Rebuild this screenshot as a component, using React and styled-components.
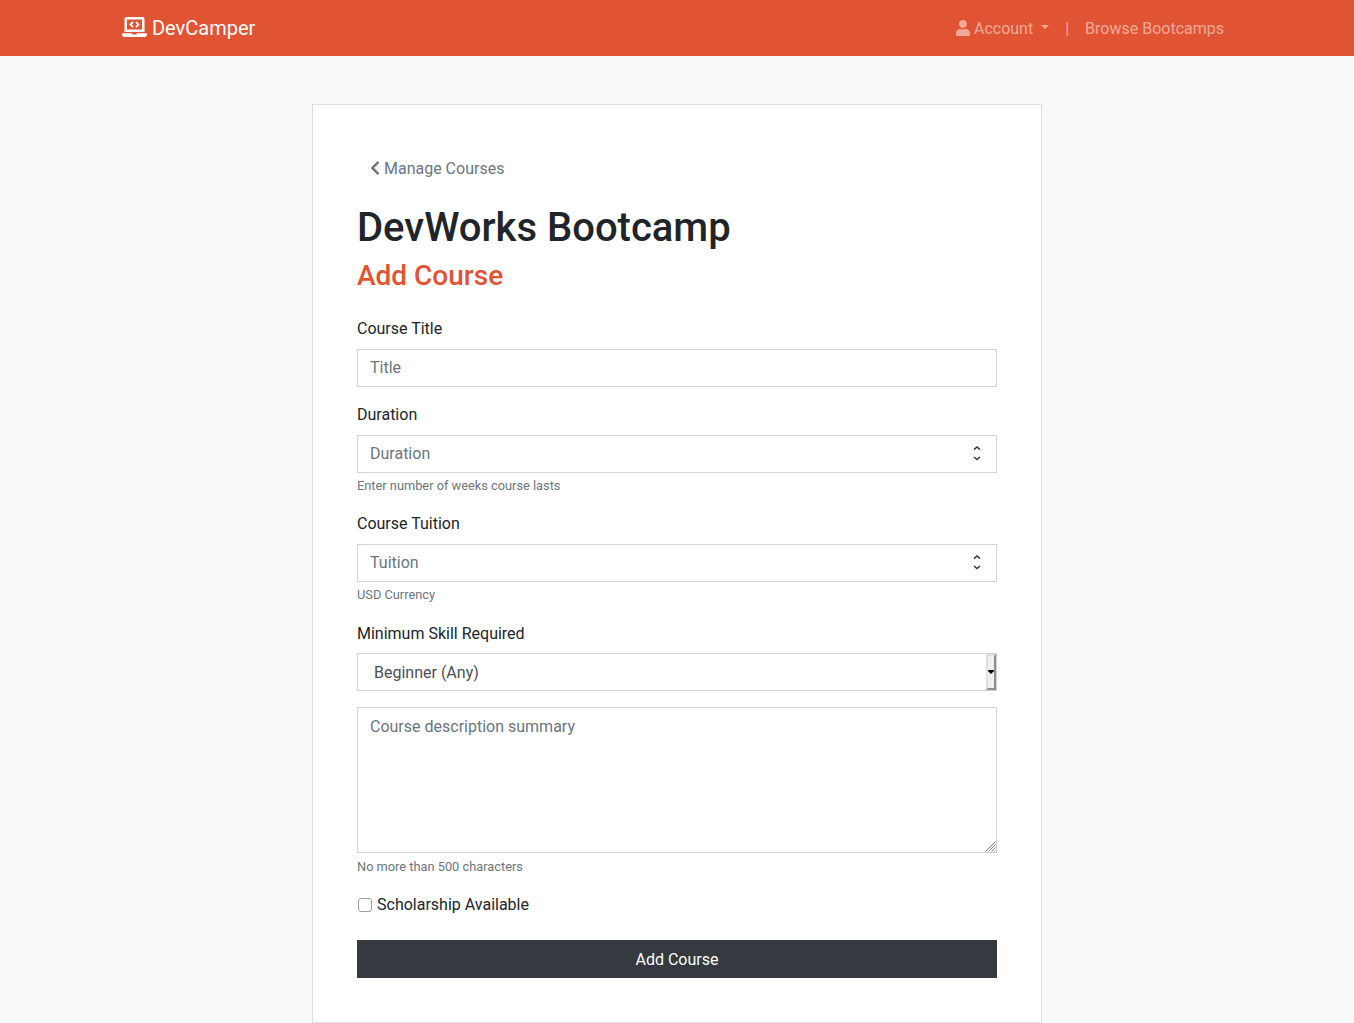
import React from "react";
import styled, { createGlobalStyle } from "styled-components";
import { FaLaptopCode, FaUser, FaChevronLeft } from "react-icons/fa";

const GlobalStyle = createGlobalStyle`
  *, *::before, *::after { box-sizing: border-box; }
  body {
    margin: 0;
    background: #f8f9fb;
    color: #212529;
    font-family: Roboto, sans-serif;
    font-size: 16px;
    line-height: 1.5;
  }
`;

const Navbar = styled.nav`
  height: 56px;
  background: #e15433;
`;

const NavContainer = styled.div`
  width: 1140px;
  height: 100%;
  margin: 0 auto;
  padding: 0 15px;
  display: flex;
  align-items: center;
  justify-content: space-between;
`;

const Brand = styled.a`
  color: #fff;
  font-size: 20px;
  line-height: 30px;
  white-space: pre;
  text-decoration: none;

  svg {
    width: 1.25em;
    height: 1em;
    vertical-align: -0.1em;
  }
`;

const NavLinks = styled.div`
  display: flex;
`;

const NavLink = styled.a`
  padding: 10px 8px 8px;
  color: rgba(255, 255, 255, 0.5);
  text-decoration: none;
  white-space: pre;

  svg {
    width: 0.875em;
    height: 1em;
    vertical-align: -0.125em;
  }
`;

const Caret = styled.span`
  display: inline-block;
  margin-left: 0.255em;
  vertical-align: 0.3em;
  border-top: 0.3em solid;
  border-right: 0.3em solid transparent;
  border-left: 0.3em solid transparent;
`;

const Card = styled.main`
  width: 730px;
  margin: 48px auto 0;
  padding: 44px;
  background: #fff;
  border: 1px solid #dfdfdf;
`;

const BackLink = styled.a`
  display: inline-block;
  height: 38px;
  margin-bottom: 16px;
  padding: 8px 13px 6px;
  color: #6c757d;
  text-decoration: none;
  white-space: pre;
  vertical-align: top;

  svg {
    width: 0.625em;
    height: 1em;
    vertical-align: -0.125em;
  }
`;

const Title = styled.h1`
  margin: 0 0 7px;
  padding-top: 1px;
  font-size: 40px;
  font-weight: 500;
  line-height: 1.2;
`;

const Subtitle = styled.h3`
  margin: 0 0 24px;
  color: #e15433;
  font-size: 28px;
  font-weight: 500;
  line-height: 1.2;
`;

const Group = styled.div`
  margin-bottom: ${(p) => p.$gap || 16}px;
`;

const Label = styled.label`
  display: block;
  margin-bottom: 8px;
`;

const SkillLabel = styled(Label)`
  padding-top: 1px;
  margin-bottom: 7px;
`;

const Field = styled.div`
  position: relative;
  display: flex;
`;

const Input = styled.input`
  width: 100%;
  height: 38px;
  padding: 6px 12px;
  border: 1px solid #ced4da;
  border-radius: 0;
  background: #fff;
  color: #495057;
  font: inherit;
  appearance: textfield;
  outline: none;

  &::placeholder { color: #6c757d; opacity: 1; }
  &::-webkit-inner-spin-button { appearance: none; margin: 0; }
`;

const Select = styled.select`
  width: 100%;
  height: 38px;
  padding: 7px 16px 5px;
  border: 1px solid #ced4da;
  border-radius: 0;
  background: #fff;
  color: #495057;
  font: inherit;
  appearance: none;
  outline: none;
`;

const TextArea = styled.textarea`
  display: block;
  width: 100%;
  height: 146px;
  padding: 7px 12px 5px;
  border: 1px solid #ced4da;
  border-radius: 0;
  background: #fff;
  color: #495057;
  font: inherit;
  resize: none;
  outline: none;

  &::placeholder { color: #6c757d; opacity: 1; }
`;

const Spinner = styled.svg`
  position: absolute;
  right: 16px;
  top: 10px;
`;

const SelectButton = styled.span`
  position: absolute;
  right: 1px;
  top: 1px;
  width: 10px;
  height: 36px;
  display: flex;
  align-items: center;
  justify-content: center;
  background: #efefef;
  border: 2px solid;
  border-color: #e0e0e0 #8f8f8f #8f8f8f #e0e0e0;
  pointer-events: none;
`;

const Grip = styled.svg`
  position: absolute;
  right: 1px;
  bottom: 1px;
`;

const Hint = styled.small`
  display: block;
  margin-top: 4px;
  color: #6c757d;
  font-size: 12.8px;
  line-height: 19.2px;
`;

const FieldHint = styled(Hint)`
  margin-top: 3px;
  padding-bottom: 1px;
`;

const CheckRow = styled.label`
  display: flex;
  align-items: center;
  gap: 5px;
  padding: 1px 0 0 1px;
`;

const Checkbox = styled.input`
  width: 14px;
  height: 14px;
  margin: 0;
  border: 1px solid #9b9b9b;
  border-radius: 3px;
  background: #fff;
  appearance: none;
`;

const Submit = styled.button`
  display: block;
  width: 100%;
  height: 38px;
  padding: 7px 12px 5px;
  border: 1px solid #343a40;
  background: #343a40;
  color: #fff;
  font: inherit;
`;

function NumberField({ id, placeholder }) {
  return (
    <Field>
      <Input id={id} type="number" placeholder={placeholder} />
      <Spinner width="8" height="18" viewBox="0 0 8 18" fill="none" stroke="#333" strokeWidth="1.4">
        <path d="M1 4.6 L4 2 L7 4.6 M1 12 L4 14.6 L7 12" />
      </Spinner>
    </Field>
  );
}

export default function App() {
  return (
    <>
      <GlobalStyle />
      <Navbar>
        <NavContainer>
          <Brand><FaLaptopCode />{" DevCamper"}</Brand>
          <NavLinks>
            <NavLink><FaUser />{" Account "}<Caret /></NavLink>
            <NavLink>|</NavLink>
            <NavLink>Browse Bootcamps</NavLink>
          </NavLinks>
        </NavContainer>
      </Navbar>
      <Card>
        <BackLink><FaChevronLeft />{" Manage Courses"}</BackLink>
        <Title>DevWorks Bootcamp</Title>
        <Subtitle>Add Course</Subtitle>
        <form>
          <Group>
            <Label htmlFor="title">Course Title</Label>
            <Field><Input id="title" type="text" placeholder="Title" /></Field>
          </Group>
          <Group>
            <Label htmlFor="duration">Duration</Label>
            <NumberField id="duration" placeholder="Duration" />
            <FieldHint>Enter number of weeks course lasts</FieldHint>
          </Group>
          <Group>
            <Label htmlFor="tuition">Course Tuition</Label>
            <NumberField id="tuition" placeholder="Tuition" />
            <FieldHint>USD Currency</FieldHint>
          </Group>
          <Group>
            <SkillLabel htmlFor="skill">Minimum Skill Required</SkillLabel>
            <Field>
              <Select id="skill" defaultValue="beginner">
                <option value="beginner">Beginner (Any)</option>
                <option value="intermediate">Intermediate</option>
                <option value="advanced">Advanced</option>
              </Select>
              <SelectButton>
                <svg width="6" height="4" viewBox="0 0 6 4"><path d="M0 0H6V1L3 4L0 1Z" fill="#000" /></svg>
              </SelectButton>
            </Field>
          </Group>
          <Group>
            <Field>
              <TextArea placeholder="Course description summary" />
              <Grip width="11" height="11" viewBox="0 0 11 11" stroke="#777" strokeWidth="1">
                <path d="M0.5 10.5 L10.5 0.5 M3.5 10.5 L10.5 3.5 M6.5 10.5 L10.5 6.5 M9.5 10.5 L10.5 9.5" />
              </Grip>
            </Field>
            <Hint>No more than 500 characters</Hint>
          </Group>
          <Group $gap={23}>
            <CheckRow><Checkbox type="checkbox" />Scholarship Available</CheckRow>
          </Group>
          <Submit type="button">Add Course</Submit>
        </form>
      </Card>
    </>
  );
}
